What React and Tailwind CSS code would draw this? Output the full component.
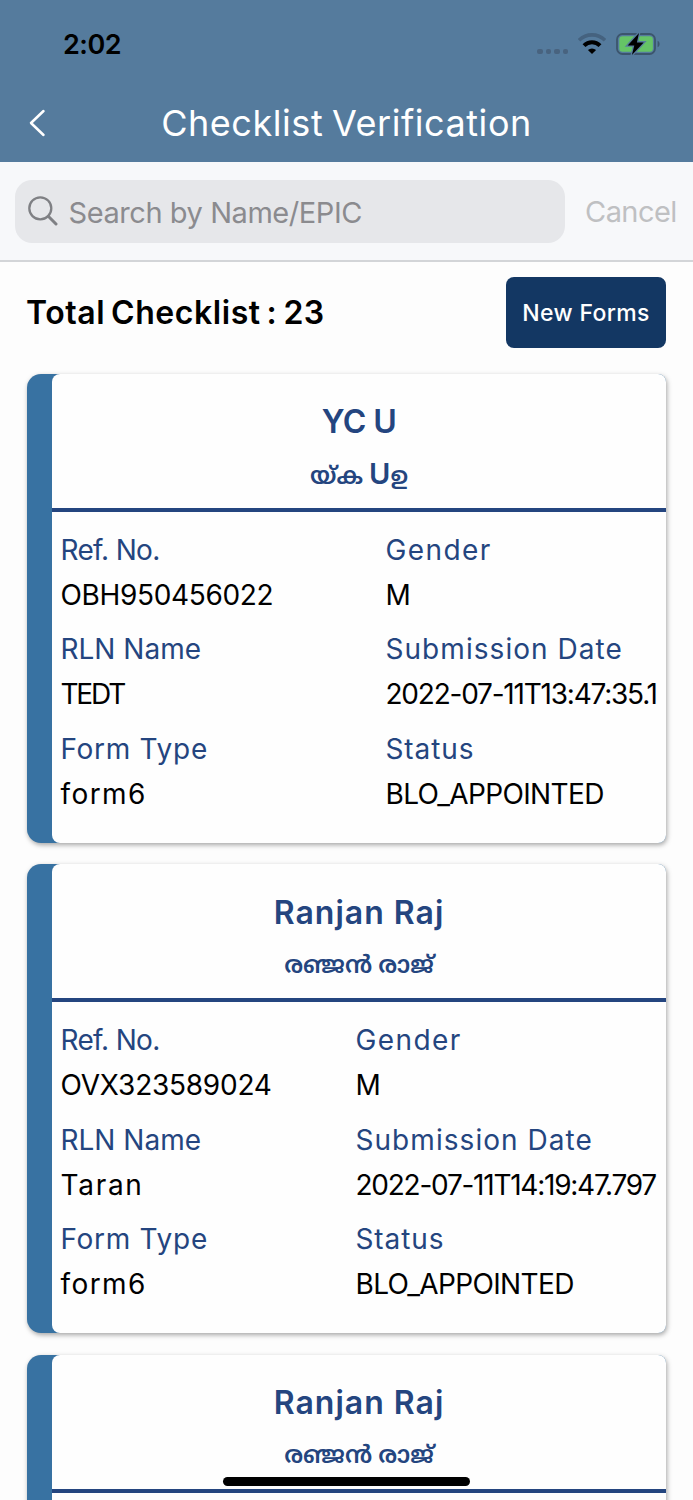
import React from 'react';

const registros = [
  {
    id: 1,
    name: 'YC U',
    nameClass: 'tracking-[-0.6px]',
    localName: (
      <>
        യ്ക <span className="text-[29px] font-semibold">U</span>ഉ
      </>
    ),
    refNo: 'OBH950456022',
    refClass: 'tracking-[-0.35px]',
    gender: 'M',
    rlnName: 'TEDT',
    rlnClass: 'tracking-[-2.2px]',
    formType: 'form6',
    date: '2022-07-11T13:47:35.1',
    dateClass: 'tracking-[-1.22px]',
    status: 'BLO_APPOINTED',
    colClass: 'w-[272px]'
  },
  {
    id: 2,
    name: 'Ranjan Raj',
    nameClass: 'tracking-[1px]',
    localName: 'രഞ്ജൻ രാജ്',
    refNo: 'OVX323589024',
    refClass: 'tracking-[-0.25px]',
    gender: 'M',
    rlnName: 'Taran',
    rlnClass: 'tracking-[1.7px]',
    formType: 'form6',
    date: '2022-07-11T14:19:47.797',
    dateClass: 'tracking-[-1.25px]',
    status: 'BLO_APPOINTED',
    colClass: 'w-[302px]'
  },
  {
    id: 3,
    name: 'Ranjan Raj',
    nameClass: 'tracking-[1px]',
    localName: 'രഞ്ജൻ രാജ്'
  }
];

function StatusBar() {
  return (
    <div className="flex h-[88px] items-center justify-between pl-[63px] pr-[33px]">
      <span className="pt-px text-[27px] font-semibold leading-none tracking-[-0.5px] text-black">2:02</span>
      <div className="flex items-center">
        <div className="mr-[10px] mt-[15px] flex gap-[3px]">
          {[0, 1, 2, 3].map((i) => (
            <span key={i} className="h-[5.5px] w-[5.5px] rounded-[2px] bg-[#48637f]" />
          ))}
        </div>
        <svg width="28" height="22" viewBox="0 0 28 22" className="mr-[10px]" fill="none">
          <path d="M1 7.2 A18.6 18.6 0 0 1 27 7.2" stroke="#45627f" strokeWidth="3.6" />
          <path d="M6 12.6 A11.2 11.2 0 0 1 22 12.6" stroke="#000" strokeWidth="4" />
          <path d="M14 21 L9.9 17 A6 6 0 0 1 18.1 17 Z" fill="#000" />
        </svg>
        <svg width="44" height="24" viewBox="0 0 44 24" fill="none">
          <rect x="1" y="2" width="38" height="20" rx="5.5" stroke="#3c556d" strokeWidth="1.8" />
          <rect x="3.3" y="4.2" width="33.6" height="15.6" rx="3.2" fill="#65c466" />
          <path d="M41.6 8.8 C44.2 9.8 44.2 14.2 41.6 15.2 Z" fill="#3c556d" />
          <path
            d="M23 1 L11.7 13.4 H18.3 L15.9 23 L27.7 10.4 H20.9 Z"
            fill="#000"
            stroke="#557b9d"
            strokeWidth="2.6"
            paintOrder="stroke"
          />
        </svg>
      </div>
    </div>
  );
}

function Header() {
  return (
    <header className="h-[162px] bg-[#557b9d]">
      <StatusBar />
      <div className="flex h-[70px] items-center">
        <svg width="18" height="28" viewBox="0 0 18 28" className="ml-[28px]" fill="none">
          <path
            d="M15.5 2 L3 14 L15.5 26"
            stroke="#fff"
            strokeWidth="2.5"
            strokeLinecap="round"
            strokeLinejoin="round"
          />
        </svg>
        <h1 className="flex-1 whitespace-nowrap pr-[46px] text-center text-[36px] font-normal leading-none tracking-[0.55px] text-white [word-spacing:-2px]">
          Checklist Verification
        </h1>
      </div>
    </header>
  );
}

function SearchBar() {
  return (
    <div className="flex h-[100px] items-center border-b-2 border-[#d3d5d8] bg-[#f7f8fa] pl-[15px]">
      <div className="flex h-[63px] w-[550px] items-center rounded-[17px] bg-[#e6e7ea] pl-[13px]">
        <svg width="30" height="30" viewBox="0 0 30 30" fill="none">
          <circle cx="12.3" cy="12.3" r="11" stroke="#7f8084" strokeWidth="2.3" />
          <path d="M20.3 20.3 L28 28" stroke="#7f8084" strokeWidth="3" strokeLinecap="round" />
        </svg>
        <span className="ml-[10.5px] whitespace-nowrap pt-[2px] text-[29px] leading-none tracking-[-0.44px] text-[#8b8b8f]">
          Search by Name/EPIC
        </span>
      </div>
      <span className="ml-[20px] whitespace-nowrap text-[29px] leading-none tracking-[-0.55px] text-[#bfc0c2]">
        Cancel
      </span>
    </div>
  );
}

function Campo({ label, value, labelClass = '', valueClass = '' }) {
  return (
    <div className="mb-[9.5px] whitespace-nowrap text-[28px] leading-[45px]">
      <div className={`text-[#24457f] ${labelClass}`}>{label}</div>
      <div className={`text-black ${valueClass}`}>{value}</div>
    </div>
  );
}

function Card({ item }) {
  return (
    <article className="mb-[21.5px] h-[469px] rounded-l-[14px] rounded-r-[8px] bg-[#3872a2] pl-[25px] shadow-[1px_2px_5px_rgba(0,0,0,0.35)]">
      <div className="h-full rounded-[8px] bg-[#fefefe]">
        <div className="h-[138.4px] border-b-4 border-[#24457f] pt-[22.9px] text-center text-[#24457f]">
          <div className={`text-[32px] font-semibold leading-[52px] ${item.nameClass}`}>{item.name}</div>
          <div className="text-[24px] font-semibold leading-[52px]">{item.localName}</div>
        </div>
        {item.refNo && (
          <div className="flex justify-between pl-[8.5px] pr-[8.5px] pt-[16px]">
            <div>
              <Campo label="Ref. No." value={item.refNo} labelClass="tracking-[-0.7px]" valueClass={item.refClass} />
              <Campo label="RLN Name" value={item.rlnName} valueClass={item.rlnClass} />
              <Campo
                label="Form Type"
                value={item.formType}
                labelClass="tracking-[0.7px]"
                valueClass="tracking-[1.4px]"
              />
            </div>
            <div className={item.colClass}>
              <Campo label="Gender" value={item.gender} labelClass="tracking-[1.4px]" />
              <Campo
                label="Submission Date"
                value={item.date}
                labelClass="tracking-[1.05px]"
                valueClass={item.dateClass}
              />
              <Campo
                label="Status"
                value={item.status}
                labelClass="tracking-[0.9px]"
                valueClass="tracking-[-0.65px]"
              />
            </div>
          </div>
        )}
      </div>
    </article>
  );
}

function App() {
  return (
    <div className="relative h-[1500px] w-full overflow-hidden bg-[#fdfdfd] font-['Inter','Noto_Sans_Malayalam',sans-serif]">
      <Header />
      <SearchBar />
      <div className="flex items-center justify-between pb-[25.6px] pl-[26px] pr-[27px] pt-[15px]">
        <h2 className="whitespace-nowrap text-[32px] font-semibold leading-none tracking-[0.55px] text-black [word-spacing:-2.6px]">
          Total Checklist : 23
        </h2>
        <button className="h-[71px] w-[160px] whitespace-nowrap rounded-[8px] bg-[#133763] pt-[2px] text-[23px] font-medium leading-none tracking-[0.35px] text-white">
          New Forms
        </button>
      </div>
      <main className="px-[27px]">
        {registros.map((item) => (
          <Card key={item.id} item={item} />
        ))}
      </main>
      {/* home indicator */}
      <div className="absolute bottom-[14px] left-[223px] h-[9px] w-[247px] rounded-full bg-black" />
    </div>
  );
}

export default App;
